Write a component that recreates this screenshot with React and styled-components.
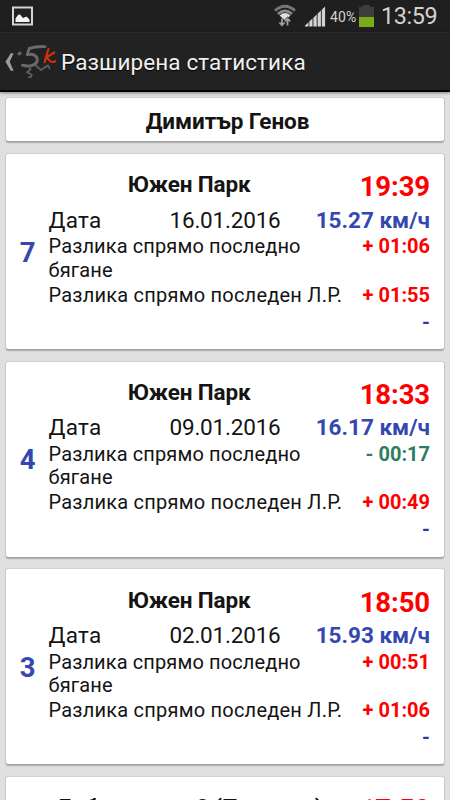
import React from 'react';
import styled, { createGlobalStyle } from 'styled-components';

const GlobalStyle = createGlobalStyle`
  * { box-sizing: border-box; }
  body { margin: 0; overflow: hidden; background: #e0e0e0; font-family: Roboto, "Noto Sans", sans-serif; }
`;

const Screen = styled.div`
  width: 450px;
  height: 800px;
  overflow: hidden;
  display: flex;
  flex-direction: column;
  background: #e0e0e0;
  color: #141414;
`;

const StatusBar = styled.header`
  flex: none;
  height: 32px;
  padding: 0 14px 0 12px;
  display: flex;
  align-items: center;
  background: #1f1f1f;
  color: #d2d2d2;
`;

const StatusIcon = styled.svg`
  flex: none;
  display: block;
  margin-left: ${(p) => p.$gap || 0}px;
`;

const Spacer = styled.div`flex: 1;`;

const Percent = styled.span`
  font-size: 14px;
  line-height: 16px;
  letter-spacing: 0.1px;
  margin: 1px 0 0 4px;
  width: 29px;
  white-space: nowrap;
`;

const Clock = styled.span`
  width: 55px;
  margin-left: 7px;
  font-size: 23.4px;
  line-height: 27px;
  letter-spacing: -0.4px;
  white-space: nowrap;
`;

const ActionBar = styled.div`
  flex: none;
  height: 60px;
  display: flex;
  align-items: center;
  padding-left: 5px;
  background: #222;
  border-top: 1px solid #2a2a2a;
  border-bottom: 2px solid #050305;
  box-shadow: 0 1px 3px rgba(0, 0, 0, 0.45);
  z-index: 1;
`;

const ActionTitle = styled.h1`
  margin: 1px 0 0 1px;
  font-size: 22.5px;
  line-height: 27px;
  font-weight: 400;
  letter-spacing: 0.11px;
  color: #f0f0f0;
  text-shadow: 0 1px 1px #000;
  white-space: nowrap;
`;

const List = styled.main`
  flex: 1;
  display: flex;
  flex-direction: column;
  gap: 12.6px;
  padding: 6.4px 6px 0 6px;
`;

const Card = styled.section`
  flex: none;
  background: #fff;
  border-radius: 2.5px;
  box-shadow: 0 0 1px 0.5px rgba(0, 0, 0, 0.07), 0 1.6px 1.5px rgba(0, 0, 0, 0.24);
`;

const NameCard = styled(Card)`
  height: 43px;
  display: flex;
  align-items: center;
  justify-content: center;
  padding: 2px 0 0 5px;
  font-size: 22.5px;
  font-weight: 700;
  letter-spacing: -0.09px;
`;

const RunCard = styled(Card)`
  height: 195.1px;
  display: grid;
  grid-template-columns: 42.5px 1fr;
  padding: 17.2px 14px 0 0;
`;

const Rank = styled.div`
  height: 162px;
  display: flex;
  align-items: center;
  justify-content: center;
  padding-left: 1px;
  font-size: 27.5px;
  font-weight: 700;
  color: #3448b0;
`;

const Details = styled.div`min-width: 0;`;

const Row = styled.div`
  display: flex;
  justify-content: space-between;
  align-items: flex-start;
  height: ${(p) => p.$height}px;
`;

const Place = styled.div`
  flex: 1;
  text-align: center;
  padding-right: 30px;
  font-size: 22.5px;
  line-height: 26.4px;
  font-weight: 700;
  letter-spacing: -0.14px;
  white-space: nowrap;
`;

const Time = styled.div`
  font-size: 27.5px;
  line-height: 32.6px;
  font-weight: 700;
  letter-spacing: -0.1px;
  color: #fe0000;
`;

const DateLabel = styled.div`
  width: 121px;
  font-size: 22.5px;
  line-height: 26.4px;
  letter-spacing: 0.29px;
`;

const DateValue = styled.div`
  flex: 1;
  font-size: 22.5px;
  line-height: 26.4px;
  letter-spacing: -0.2px;
`;

const Speed = styled.div`
  font-size: 22.5px;
  line-height: 26.4px;
  font-weight: 700;
  color: #3448b0;
`;

const DiffLabel = styled.div`
  font-size: 20px;
  line-height: 23.4px;
  letter-spacing: ${(p) => p.$tracking}px;
  white-space: pre-line;
`;

const tones = { slower: '#fe0000', faster: '#2e7d62', neutral: '#2b3a9c' };

const Diff = styled.div`
  margin-left: auto;
  font-size: 20px;
  line-height: 23.4px;
  font-weight: 700;
  color: ${(p) => tones[p.$tone]};
  white-space: nowrap;
`;

const runs = [
  { rank: '7', place: 'Южен Парк', time: '19:39', date: '16.01.2016', speed: '15.27 км/ч', last: '+ 01:06', tone: 'slower', best: '+ 01:55' },
  { rank: '4', place: 'Южен Парк', time: '18:33', date: '09.01.2016', speed: '16.17 км/ч', last: '- 00:17', tone: 'faster', best: '+ 00:49' },
  { rank: '3', place: 'Южен Парк', time: '18:50', date: '02.01.2016', speed: '15.93 км/ч', last: '+ 00:51', tone: 'slower', best: '+ 01:06' },
  { place: 'Добруджани 2 (Пловдив)', time: '17:50' },
];

function Run({ run }) {
  return (
    <RunCard>
      <Rank>{run.rank}</Rank>
      <Details>
        <Row $height={35.6}>
          <Place>{run.place}</Place>
          <Time>{run.time}</Time>
        </Row>
        {run.date && (
          <>
            <Row $height={28.5}>
              <DateLabel>Дата</DateLabel>
              <DateValue>{run.date}</DateValue>
              <Speed>{run.speed}</Speed>
            </Row>
            <Row $height={48.4}>
              <DiffLabel $tracking={0.12}>{'Разлика спрямо последно\nбягане'}</DiffLabel>
              <Diff $tone={run.tone}>{run.last}</Diff>
            </Row>
            <Row $height={26.9}>
              <DiffLabel $tracking={0.22}>Разлика спрямо последен Л.Р.</DiffLabel>
              <Diff $tone="slower">{run.best}</Diff>
            </Row>
            <Row $height={24}>
              <Diff $tone="neutral">-</Diff>
            </Row>
          </>
        )}
      </Details>
    </RunCard>
  );
}

const PictureIcon = () => (
  <StatusIcon width="21" height="20" viewBox="0 0 21 20">
    <rect x="1" y="1.5" width="19" height="17" fill="#202020" stroke="#d4d4d4" strokeWidth="2" />
    <path d="M3.5 16V12.5L6.2 8.8L8 8.6L11 12L14.5 10.5L17.5 13.5V16Z" fill="#f4f4f4" />
  </StatusIcon>
);

const WifiIcon = () => (
  <StatusIcon width="22" height="24" viewBox="0 0 22 24" fill="none">
    <path d="M1 6.6Q11 -2 21 6.6" stroke="#777" strokeWidth="2.8" />
    <path d="M4 10Q11 3.8 18 10" stroke="#8b8b8b" strokeWidth="2.6" />
    <path d="M5.6 11.4Q11 6.8 16.4 11.4L11 16.5Z" fill="#dedede" />
    <path d="M8 16V21M5.4 18.5L8 21.3L10.6 18.5M13.5 22V16M11 17.6L13.5 14.8L16 17.6" stroke="#1f1f1f" strokeWidth="3" />
    <path d="M8 14.5V21M5.4 18.5L8 21.3L10.6 18.5M13.5 21.5V15M10.9 17.4L13.5 14.6L16.1 17.4" stroke="#a0a0a0" strokeWidth="1.8" />
  </StatusIcon>
);

const SignalIcon = () => (
  <StatusIcon $gap={9} width="21" height="21" viewBox="0 0 21 21" fill="#d3d3d3">
    <path d="M0 20.5V19.5L3.5 16.3V20.5ZM4.3 20.5V15.6L7.5 12.6V20.5ZM8.4 20.5V11.8L11.7 8.6V20.5ZM12.6 20.5V7.8L15.9 4.5V20.5ZM16.8 20.5V3.7L20.1 .5V20.5Z" />
  </StatusIcon>
);

const BatteryIcon = () => (
  <StatusIcon width="15" height="22" viewBox="0 0 15 22">
    <path d="M0 2H4V0H11V2H15V12H0Z" fill="#3d3d3d" />
    <path d="M0 12H15V22H0Z" fill="#7aaa18" />
  </StatusIcon>
);

const BackIcon = () => (
  <StatusIcon width="9" height="20" viewBox="0 0 9 20">
    <path d="M5.8 1.2H8.6L4.7 9.8L8.6 18.8H5.8L.5 9.8Z" fill="#9c9c9c" />
  </StatusIcon>
);

const RunnerLogo = () => (
  <StatusIcon $gap={1} width="45" height="45" viewBox="0 0 45 45" fill="none" strokeLinecap="round" strokeLinejoin="round">
    <path d="M4 14.8L5.2 14.2" stroke="#606060" strokeWidth="3.2" />
    <path d="M30 7.6Q22 7 14.3 9.4L12.2 15.7C18 14 22.7 17 22.2 21.5C21.5 26 14.5 28.3 7.5 26.2" stroke="#6b6b6b" strokeWidth="2.9" />
    <path d="M14.2 27.5L15.6 30.3L12 33.3L16.8 35.8L15.8 38.2H14M21 26.8L26 31L29.7 28.4L33.2 26.4L34.6 29.5" stroke="#5e5e5e" strokeWidth="1.8" />
    <path d="M33.5 9.8L29.6 23.3M39.3 13.5L31.5 18.3L35.3 22.2Q37 23.8 40.2 22.2" stroke="#d72f0c" strokeWidth="2.1" />
  </StatusIcon>
);

export default function App() {
  return (
    <Screen>
      <GlobalStyle />
      <StatusBar>
        <PictureIcon />
        <Spacer />
        <WifiIcon />
        <SignalIcon />
        <Percent>40%</Percent>
        <BatteryIcon />
        <Clock>13:59</Clock>
      </StatusBar>
      <ActionBar>
        <BackIcon />
        <RunnerLogo />
        <ActionTitle>Разширена статистика</ActionTitle>
      </ActionBar>
      <List>
        <NameCard>Димитър Генов</NameCard>
        {runs.map((run, i) => <Run key={i} run={run} />)}
      </List>
    </Screen>
  );
}
